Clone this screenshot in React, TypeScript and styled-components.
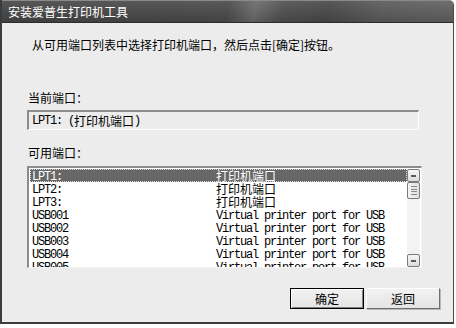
import React from 'react'
import styled, { createGlobalStyle } from 'styled-components'

const ports = [
  { name: 'LPT1:', desc: '打印机端口' },
  { name: 'LPT2:', desc: '打印机端口' },
  { name: 'LPT3:', desc: '打印机端口' },
  { name: 'USB001', desc: 'Virtual printer port for USB' },
  { name: 'USB002', desc: 'Virtual printer port for USB' },
  { name: 'USB003', desc: 'Virtual printer port for USB' },
  { name: 'USB004', desc: 'Virtual printer port for USB' },
  { name: 'USB005', desc: 'Virtual printer port for USB' },
]

// split a string into CJK and latin runs, so each gets its own font
function Mixed({ text }: { text: string }): JSX.Element {
  const runs = text.match(/[\u3000-\u9fff\uff00-\uffef]+|[^\u3000-\u9fff\uff00-\uffef]+/g) || []
  return (
    <>
      {runs.map((r, i) =>
        /[\u3000-\u9fff\uff00-\uffef]/.test(r) ? <Han key={i}>{r}</Han> : <Latin key={i}>{r}</Latin>
      )}
    </>
  )
}

const App = (): JSX.Element => {
  return (
    <>
      <GlobalStyle />
      <Window>
        <TitleBar>安装爱普生打印机工具</TitleBar>
        <Body>
          <Instruction>从可用端口列表中选择打印机端口，然后点击[确定]按钮。</Instruction>
          <Label $top={39}>当前端口：</Label>
          <Field>
            <Mixed text="LPT1: (打印机端口)" />
          </Field>
          <Label $top={16}>可用端口：</Label>
          <ListBox>
            <Rows>
              {ports.map((p, i) => (
                <Row key={p.name} $selected={i === 0}>
                  <NameCell>
                    <Mixed text={p.name} />
                  </NameCell>
                  <DescCell>
                    <Mixed text={p.desc} />
                  </DescCell>
                </Row>
              ))}
            </Rows>
            <ScrollBar>
              <ScrollButton>
                <Dash />
              </ScrollButton>
              <Thumb>
                <Grip />
                <Grip />
                <Grip />
                <Grip />
              </Thumb>
              <Track />
              <ScrollButton>
                <Dash />
              </ScrollButton>
            </ScrollBar>
          </ListBox>
          <Buttons>
            <Button $default>确定</Button>
            <Button>返回</Button>
          </Buttons>
        </Body>
      </Window>
    </>
  )
}

export default App

// Styling
const GlobalStyle = createGlobalStyle`
  body {
    margin: 0;
    background: #ffffff;
    font-family: "Noto Sans CJK SC", sans-serif;
  }
`

const Window = styled.div`
  box-sizing: border-box;
  width: 454px;
  height: 324px;
  display: flex;
  flex-direction: column;
  border-left: 2px solid #3c3c3c;
  border-bottom: 2px solid #3c3c3c;
  border-right: 1px solid #4a4a4a;
  border-top-right-radius: 5px;
  background: #ececec;
  overflow: hidden;
`

const TitleBar = styled.div`
  box-sizing: border-box;
  height: 23px;
  padding-left: 6px;
  display: flex;
  align-items: center;
  color: #ffffff;
  font-size: 12px;
  border-bottom: 1px solid #2c2c2c;
  border-top: 1px solid #8a8a8a;
  background:
    linear-gradient(180deg, rgba(255, 255, 255, 0.08), rgba(0, 0, 0, 0.12)),
    linear-gradient(100deg, #474747 0%, #4b4b4b 50%, #6c6c6c 56%, #505050 62%, #494949 72%, #5c5c5c 84%, #626262 100%);
`

const Body = styled.div`
  flex: 1;
  display: flex;
  flex-direction: column;
  padding-left: 25px;
  color: #000000;
  font-size: 12px;
  line-height: 14px;
`

const Instruction = styled.div`
  margin-top: 15px;
  padding-left: 5px;
`

const Label = styled.div<{ $top: number }>`
  margin-top: ${({ $top }) => $top}px;
  padding-left: 1px;
`

const Field = styled.div`
  box-sizing: border-box;
  margin-top: 5px;
  width: 392px;
  height: 20px;
  padding: 0 3px;
  display: flex;
  align-items: center;
  background: #ececec;
  border-top: 2px solid #8c8c8c;
  border-left: 2px solid #8c8c8c;
  border-bottom: 1px solid #ffffff;
  border-right: 1px solid #ffffff;
  white-space: pre;
`

const Latin = styled.span`
  font-family: "Liberation Mono", monospace;
  font-size: 12px;
  letter-spacing: -1.2px;
`

const Han = styled.span`
  display: inline-block;
  height: 13px;
  line-height: 13px;
  font-family: "Noto Sans CJK SC", sans-serif;
  font-size: 12px;
`

const ListBox = styled.div`
  box-sizing: border-box;
  margin-top: 6px;
  width: 395px;
  height: 102px;
  display: flex;
  background: #ffffff;
  border-top: 2px solid #8c8c8c;
  border-left: 2px solid #8c8c8c;
  border-bottom: 1px solid #f4f4f4;
  border-right: 1px solid #f4f4f4;
  overflow: hidden;
`

const Rows = styled.div`
  flex: 1;
  padding: 1px 0 0 1px;
  display: flex;
  flex-direction: column;
`

const Row = styled.div<{ $selected?: boolean }>`
  box-sizing: border-box;
  height: 13px;
  flex-shrink: 0;
  display: flex;
  align-items: center;
  padding-left: 2px;
  white-space: pre;
  line-height: 13px;
  color: ${({ $selected }) => ($selected ? '#ffffff' : '#000000')};
  background: ${({ $selected }) => ($selected ? '#676767' : 'transparent')};
  outline: ${({ $selected }) => ($selected ? '1px dotted #d8d8d8' : 'none')};
  outline-offset: -1px;
`

const NameCell = styled.div`
  width: 184px;
`

const DescCell = styled.div`
  flex: 1;
`

const ScrollBar = styled.div`
  width: 13px;
  margin: 1px 1px 0 0;
  display: flex;
  flex-direction: column;
  background: #f3f3f3;
`

const ScrollButton = styled.div`
  box-sizing: border-box;
  height: 13px;
  display: flex;
  align-items: center;
  justify-content: center;
  background: linear-gradient(180deg, #f6f6f6, #dcdcdc);
  border: 1px solid #7a7a7a;
  border-radius: 2px;
`

const Dash = styled.div`
  width: 5px;
  height: 2px;
  background: #5a5a5a;
`

const Thumb = styled.div`
  box-sizing: border-box;
  height: 17px;
  padding: 3px 0;
  display: flex;
  flex-direction: column;
  align-items: center;
  justify-content: space-between;
  background: linear-gradient(90deg, #f4f4f4, #e0e0e0);
  border: 1px solid #7a7a7a;
  border-radius: 2px;
`

const Grip = styled.div`
  width: 6px;
  height: 1px;
  background: #8a8a8a;
`

const Track = styled.div`
  flex: 1;
`

const Buttons = styled.div`
  margin-top: 20px;
  padding-left: 263px;
  display: flex;
  gap: 2px;
`

const Button = styled.button<{ $default?: boolean }>`
  box-sizing: border-box;
  width: 74px;
  height: 21px;
  padding: 0;
  font-family: "Noto Sans CJK SC", sans-serif;
  font-size: 12px;
  color: #000000;
  background: linear-gradient(180deg, #f2f2f2, #e4e4e4);
  border: 1px solid;
  border-color: ${({ $default }) =>
    $default ? '#000000' : '#ffffff #6e6e6e #6e6e6e #ffffff'};
  box-shadow: ${({ $default }) =>
    $default
      ? 'inset 1px 1px 0 #ffffff, inset -1px -1px 0 #808080'
      : '1px 1px 0 #b8b8b8'};
`
